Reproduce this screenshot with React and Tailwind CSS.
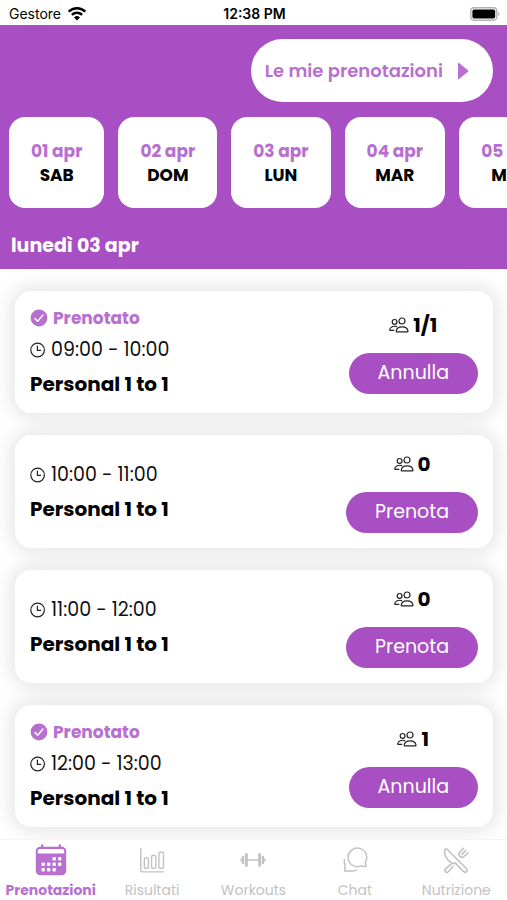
import React, { useState } from "react";

const DAYS = [
  { date: "01 apr", day: "SAB" },
  { date: "02 apr", day: "DOM" },
  { date: "03 apr", day: "LUN" },
  { date: "04 apr", day: "MAR" },
  { date: "05 apr", day: "MER" },
];

const SLOTS = [
  { time: "09:00 - 10:00", title: "Personal 1 to 1", count: "1/1", booked: true },
  { time: "10:00 - 11:00", title: "Personal 1 to 1", count: "0", booked: false },
  { time: "11:00 - 12:00", title: "Personal 1 to 1", count: "0", booked: false },
  { time: "12:00 - 13:00", title: "Personal 1 to 1", count: "1", booked: true },
];

const TABS = [
  { label: "Prenotazioni", icon: IconCalendar },
  { label: "Risultati", icon: IconChart },
  { label: "Workouts", icon: IconDumbbell },
  { label: "Chat", icon: IconChat },
  { label: "Nutrizione", icon: IconCutlery },
];

function IconWifi() {
  return (
    <svg viewBox="0 0 20 15" className="h-[15px] w-5" fill="none" stroke="#000" strokeWidth="2.6" aria-hidden="true">
      <path d="M1.7 5.6a11.8 11.8 0 0 1 16.6 0" />
      <path d="M4.9 8.9a7.3 7.3 0 0 1 10.2 0" />
      <path d="M7 11.4a4.3 4.3 0 0 1 6 0L10 14.4z" fill="#000" stroke="none" />
    </svg>
  );
}

function IconBattery() {
  return (
    <svg viewBox="0 0 30 14" className="h-3.5 w-[30px]" aria-hidden="true">
      <rect x="0.8" y="0.8" width="26" height="12.4" rx="3.4" fill="#fff" stroke="#b3b3b3" strokeWidth="1.4" />
      <rect x="2.4" y="2.4" width="22.8" height="9.2" rx="1.8" fill="#000" />
      <path d="M28.2 4.8c1.7.5 1.7 3.9 0 4.4z" fill="#b3b3b3" />
    </svg>
  );
}

function IconCheck() {
  return (
    <svg viewBox="0 0 18 18" className="h-[18px] w-[18px]" aria-hidden="true">
      <circle cx="9" cy="9" r="8.4" fill="#b76fd0" />
      <path d="M5 9.6l2.7 2.6 5.2-6.2" fill="none" stroke="#fff" strokeWidth="1.5" strokeLinecap="round" strokeLinejoin="round" />
    </svg>
  );
}

function IconClock() {
  return (
    <svg viewBox="0 0 16 16" className="h-4 w-4" fill="none" stroke="#222" strokeWidth="1.2" strokeLinecap="round" aria-hidden="true">
      <circle cx="7.6" cy="8" r="6.8" />
      <path d="M7.4 4v4.4h3.2" />
    </svg>
  );
}

function IconPeople() {
  return (
    <svg viewBox="0 0 20 16" className="h-4 w-5" fill="none" stroke="#222" strokeWidth="1.2" strokeLinecap="round" strokeLinejoin="round" aria-hidden="true">
      <circle cx="13" cy="4" r="3" />
      <path d="M7.2 14.2c.3-3 2.8-4.4 5.9-4.4s5.6 1.400 5.900 4.400c0 .4-.3.6-.7.6H7.900c-.4 0-.7-.2-.7-.6z" />
      <circle cx="5.6" cy="4.9" r="2.4" />
      <path d="M7.700 9.600c-3-1-6.700.2-7 3.200 0 .4.200.6.600.6h3.500" />
    </svg>
  );
}

function IconCalendar() {
  return (
    <svg viewBox="0 0 32 32" className="h-8 w-8" aria-hidden="true">
      <path d="M7.2 1.4v4M24.8 1.4v4" stroke="#b76fd0" strokeWidth="2.4" strokeLinecap="round" />
      <rect x="0.8" y="2.8" width="30.4" height="28.4" rx="4.5" fill="#b76fd0" />
      <path d="M2.8 9.4V7.2c0-1.3.9-2.2 2.200-2.200h22c1.300 0 2.200.9 2.200 2.200v2.200z" fill="#fff" />
      <g fill="#fff">
        <rect x="17.5" y="13" width="3.4" height="3.4" rx="1" />
        <rect x="23" y="13" width="3.4" height="3.4" rx="1" />
        <rect x="6.5" y="18.5" width="3.4" height="3.4" rx="1" />
        <rect x="12" y="18.5" width="3.4" height="3.4" rx="1" />
        <rect x="17.5" y="18.5" width="3.4" height="3.4" rx="1" />
        <rect x="23" y="18.5" width="3.4" height="3.4" rx="1" />
        <rect x="6.5" y="24" width="3.4" height="3.4" rx="1" />
        <rect x="12" y="24" width="3.4" height="3.4" rx="1" />
        <rect x="17.5" y="24" width="3.4" height="3.4" rx="1" />
      </g>
    </svg>
  );
}

function IconChart() {
  return (
    <svg viewBox="0 0 32 32" className="h-8 w-8" fill="none" stroke="#c2c2c2" strokeWidth="1.4" strokeLinecap="round" strokeLinejoin="round" aria-hidden="true">
      <path d="M4.8 4.500v21.200a2.200 2.200 0 0 0 2.200 2.200h20.500" />
      <rect x="8.3" y="14" width="4.2" height="10.2" rx="1" />
      <rect x="15.6" y="11.5" width="4.2" height="12.7" rx="1" />
      <rect x="22.9" y="8.3" width="4.6" height="15.9" rx="1" />
    </svg>
  );
}

function IconDumbbell() {
  return (
    <svg viewBox="0 0 32 32" className="h-8 w-8" fill="none" stroke="#c2c2c2" strokeLinecap="round" aria-hidden="true">
      <path d="M10 16h12" strokeWidth="1.6" />
      <path d="M9.4 10.5v11M22.6 10.5v11" strokeWidth="2.8" />
      <path d="M6 13v6M26 13v6" strokeWidth="2.4" />
      <path d="M4 15.2v1.6M28 15.2v1.6" strokeWidth="1.4" />
    </svg>
  );
}

function IconChat() {
  return (
    <svg viewBox="0 0 32 32" className="h-8 w-8" fill="none" stroke="#c2c2c2" strokeWidth="1.5" strokeLinecap="round" strokeLinejoin="round" aria-hidden="true">
      <path d="M26.2 18.500a9.300 9.300 0 1 0-4 3.400c1.400.3 3 .7 4.400.7.500 0 .7-.4.600-.8-.3-1-.7-2.200-1-3.300z" />
      <path d="M5.400 15.500c-.3 1.900 0 4 .8 5.800l-.7 5c0 .7.400 1 .9.900l4.200-.5c2.400.7 4.700.4 6.700-.6" />
    </svg>
  );
}

function IconCutlery() {
  return (
    <svg viewBox="0 0 32 32" className="h-8 w-8" fill="none" stroke="#c2c2c2" strokeWidth="1.6" strokeLinecap="round" strokeLinejoin="round" aria-hidden="true">
      {/* knife */}
      <path d="M5.300 5.200c.5-.6 1.300-.5 1.800 0l19.500 19.600c1.700 1.900-1 4.600-2.900 2.900l-8.300-8.600-3.200.3C6.500 16.300 3.100 9.800 5.300 5.200z" />
      {/* fork */}
      <path d="M11 20.200l-5.400 4.600c-2 1.900.7 4.900 2.700 2.900l4.800-5.500" />
      <path d="M23.500 4.400l-3.700 3.800c-1.300 1.400-1.200 2.900.1 4.200s2.800 1.400 4.200.1l3.800-3.700M25.700 6.600l-3.800 3.800" />
    </svg>
  );
}

function DayCard({ date, day, onClick }) {
  return (
    <button
      type="button"
      onClick={onClick}
      className="h-[91px] shrink-0 rounded-2xl bg-white px-[22px] text-center text-[17px] leading-6 font-bold"
    >
      <span className="block text-[#b76fd0]">{date}</span>
      <span className="block text-black">{day}</span>
    </button>
  );
}

function SlotCard({ slot }) {
  return (
    <li className="flex items-center justify-between rounded-2xl bg-white p-[15px] shadow-[0_0_18px_5px_rgba(0,0,0,0.1)]">
      <div className="flex flex-col gap-1.5">
        {slot.booked && (
          <div className="flex items-center gap-[5px] text-[17px] leading-6 font-bold text-[#b76fd0]">
            <IconCheck />
            <span>Prenotato</span>
          </div>
        )}
        <div className="flex items-center gap-[5px] text-[19px] leading-7 text-[#111]">
          <IconClock />
          <span>{slot.time}</span>
        </div>
        <h2 className="text-xl leading-7 font-bold text-black">{slot.title}</h2>
      </div>

      <div className="flex flex-col items-center gap-3.5">
        <div className="flex items-center gap-1 text-xl leading-7 font-bold text-black">
          <IconPeople />
          <span>{slot.count}</span>
        </div>
        <button type="button" className="h-[41px] rounded-full bg-[#a94fc4] px-[29px] text-[19px] text-white">
          {slot.booked ? "Annulla" : "Prenota"}
        </button>
      </div>
    </li>
  );
}

export default function App() {
  const [tab, setTab] = useState("Prenotazioni");

  return (
    <div className="flex h-screen flex-col bg-white font-['Poppins','Inter',sans-serif]">
      {/* Status bar */}
      <div className="grid h-[25px] shrink-0 grid-cols-3 items-center pt-0.5 pr-[7px] pl-[9px] font-['Inter',sans-serif] text-sm text-black">
        <div className="flex items-center gap-1.5">
          <span>Gestore</span>
          <IconWifi />
        </div>
        <span className="text-center font-semibold">12:38 PM</span>
        <div className="flex justify-end">
          <IconBattery />
        </div>
      </div>

      <header className="flex h-[244px] shrink-0 flex-col bg-[#a94fc4] pt-3.5">
        <button
          type="button"
          className="mr-3.5 flex h-[63px] items-center gap-3.5 self-end rounded-full bg-white pr-6 pl-3.5 text-lg font-semibold text-[#b76fd0]"
        >
          Le mie prenotazioni
          <svg viewBox="0 0 12 18" className="h-[18px] w-3" aria-hidden="true">
            <path d="M1 1.500v15c0 .6.600.900 1 .500l9-7.200c.500-.4.500-1.200 0-1.600L2 1C1.600.6 1 .9 1 1.500z" fill="#b76fd0" />
          </svg>
        </button>

        <div className="mt-[15px] flex gap-3.5 overflow-x-auto pl-[9px] [scrollbar-width:none]">
          {DAYS.map((d) => (
            <DayCard key={d.date} date={d.date} day={d.day} />
          ))}
        </div>

        <h1 className="mt-6 pl-[11px] text-[19px] leading-7 font-bold text-white">lunedì 03 apr</h1>
      </header>

      {/* Slots */}
      <main className="min-h-0 flex-1 overflow-y-auto [scrollbar-width:none]">
        <ul className="flex flex-col gap-[22px] pt-[22px] pr-3.5 pb-3 pl-[15px]">
          {SLOTS.map((s) => (
            <SlotCard key={s.time} slot={s} />
          ))}
        </ul>
      </main>

      {/* Bottom tabs */}
      <nav className="grid h-[61px] shrink-0 grid-cols-5 border-t border-gray-100 bg-white">
        {TABS.map(({ label, icon: Icon }) => (
          <button
            key={label}
            type="button"
            onClick={() => setTab(label)}
            className={
              tab === label
                ? "flex flex-col items-center pt-1 text-sm font-bold text-[#b76fd0]"
                : "flex flex-col items-center pt-1 text-sm text-[#c2c2c2]"
            }
          >
            <Icon />
            <span className="mt-1">{label}</span>
          </button>
        ))}
      </nav>
    </div>
  );
}
